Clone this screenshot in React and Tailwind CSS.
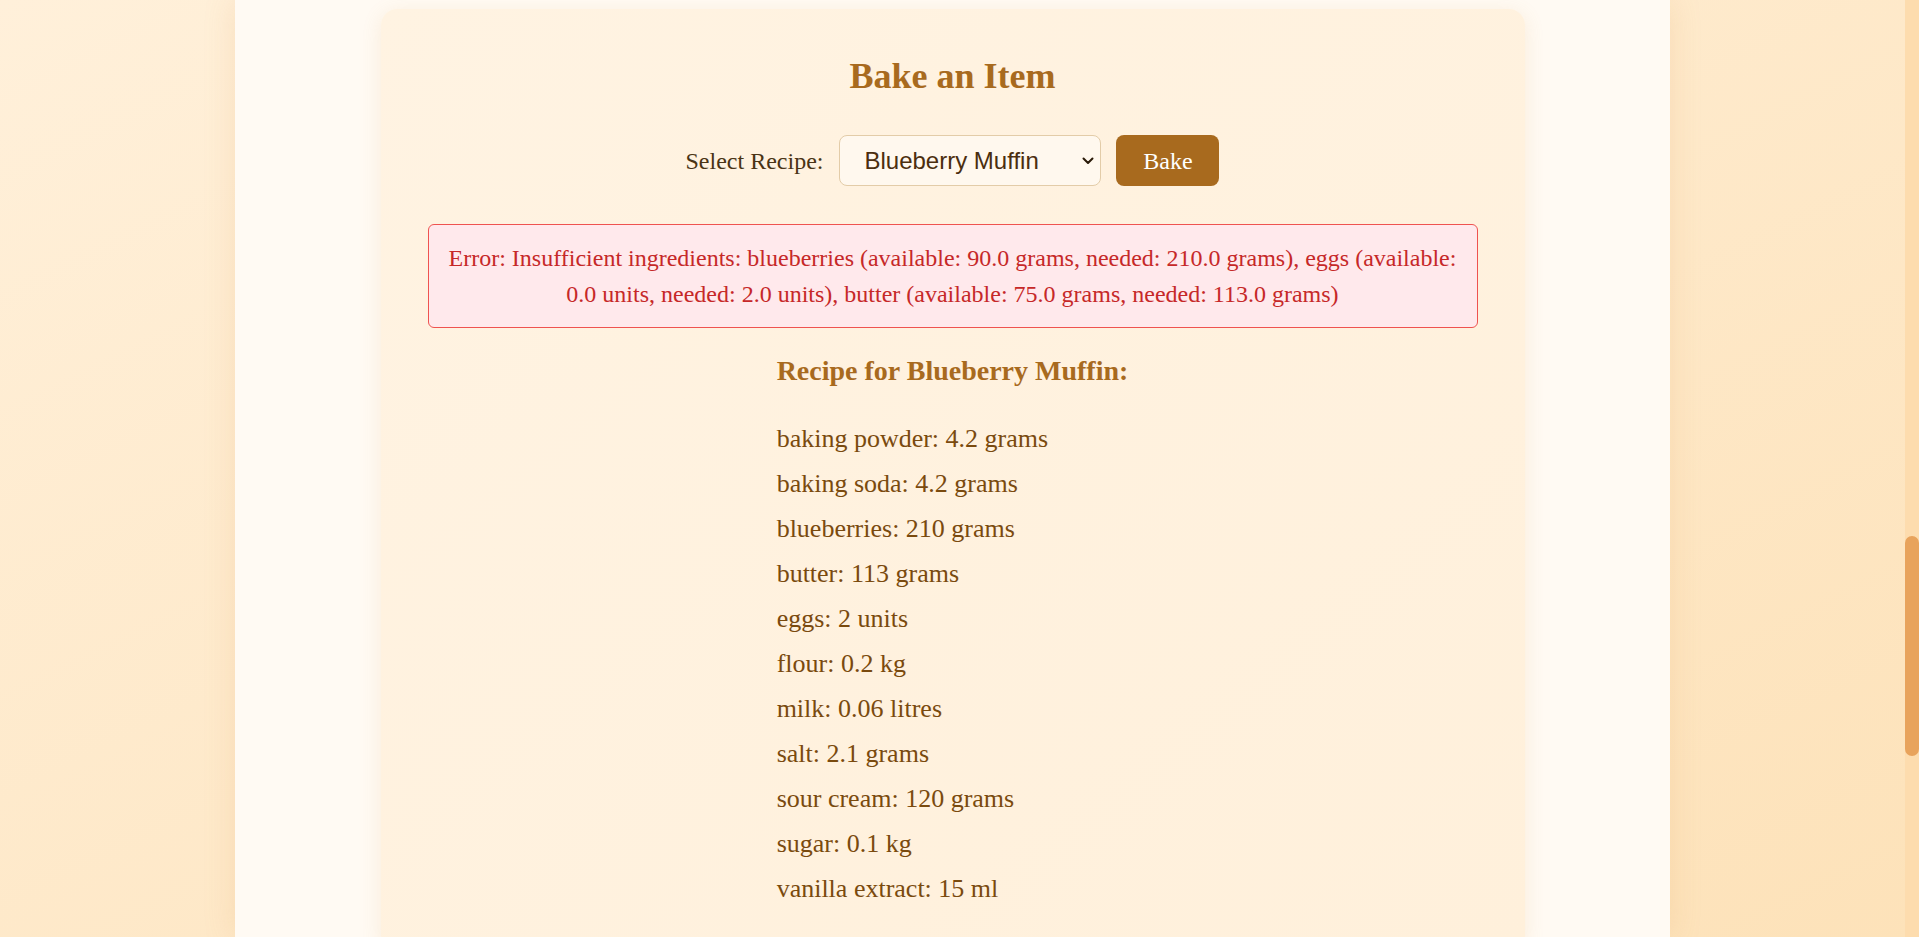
import React from 'react';

const ingredients = [
  'baking powder: 4.2 grams',
  'baking soda: 4.2 grams',
  'blueberries: 210 grams',
  'butter: 113 grams',
  'eggs: 2 units',
  'flour: 0.2 kg',
  'milk: 0.06 litres',
  'salt: 2.1 grams',
  'sour cream: 120 grams',
  'sugar: 0.1 kg',
  'vanilla extract: 15 ml',
];

const App = () => {
  return (
    <div className="h-screen overflow-hidden flex bg-linear-to-br from-[#fff0da] to-[#fde2b9] font-['Liberation_Serif','Times_New_Roman',serif]">
      <main className="flex-1 min-w-0">
        <div className="w-[1435px] h-screen mx-auto bg-[#fffaf3] shadow-[0_0_30px_rgba(214,150,70,0.18)] pt-[9px]">
          {/* Bake card */}
          <section className="w-[1144px] mx-auto rounded-2xl bg-linear-to-br from-[#fff3e2] to-[#fff0db] shadow-[0_4px_20px_rgba(210,150,70,0.14)] pt-[46px] px-[47px] pb-10">
            <h2 className="text-center text-[36px] leading-[43px] font-bold text-[#a86a1e]">Bake an Item</h2>

            <div className="mt-[37px] flex items-center justify-center gap-[15px]">
              <label htmlFor="recipe" className="mr-px text-[24px] text-[#4a3415]">Select Recipe:</label>
              <div className="relative">
                <select
                  id="recipe"
                  defaultValue="blueberry-muffin"
                  className="appearance-none block w-[262px] h-[51px] pl-[24px] pr-10 rounded-lg border border-[#e3cca8] bg-[#fff8ee] text-[24px] text-[#4b2e0e] font-['Liberation_Sans',Arial,sans-serif]"
                >
                  <option value="blueberry-muffin">Blueberry Muffin</option>
                </select>
                <svg
                  className="pointer-events-none absolute right-[7px] top-[22px]"
                  width="12"
                  height="8"
                  viewBox="0 0 12 8"
                  fill="none"
                >
                  <polyline points="1.5,1.5 6,6 10.5,1.5" stroke="#2a1a08" strokeWidth="2" strokeLinecap="round" strokeLinejoin="round" />
                </svg>
              </div>
              <button className="w-[103px] h-[51px] rounded-lg bg-[#a86a1e] text-white text-[24px]">Bake</button>
            </div>

            <div className="mt-[38px] rounded-md border border-[#ef5350] bg-[#ffe9ec] px-[15px] py-[15px] text-center text-[24px] leading-[36px] text-[#c62828]">
              Error: Insufficient ingredients: blueberries (available: 90.0 grams, needed: 210.0 grams), eggs (available: 0.0 units, needed: 2.0 units), butter (available: 75.0 grams, needed: 113.0 grams)
            </div>

            {/* Recipe details */}
            <div className="mt-[26px] w-fit mx-auto text-left">
              <h3 className="text-[28px] leading-[34px] font-bold text-[#a86a1e]">Recipe for Blueberry Muffin:</h3>
              <ul className="mt-[28px]">
                {ingredients.map((item) => (
                  <li key={item} className="text-[26px] leading-[45px] text-[#7a4a0e]">{item}</li>
                ))}
              </ul>
            </div>
          </section>
        </div>
      </main>

      {/* page scrollbar */}
      <div className="w-[14px] shrink-0 bg-[#fddcae] flex flex-col">
        <div className="mt-[536px] h-[220px] rounded-full bg-[#e8a35c]"></div>
      </div>
    </div>
  );
};

export default App;
